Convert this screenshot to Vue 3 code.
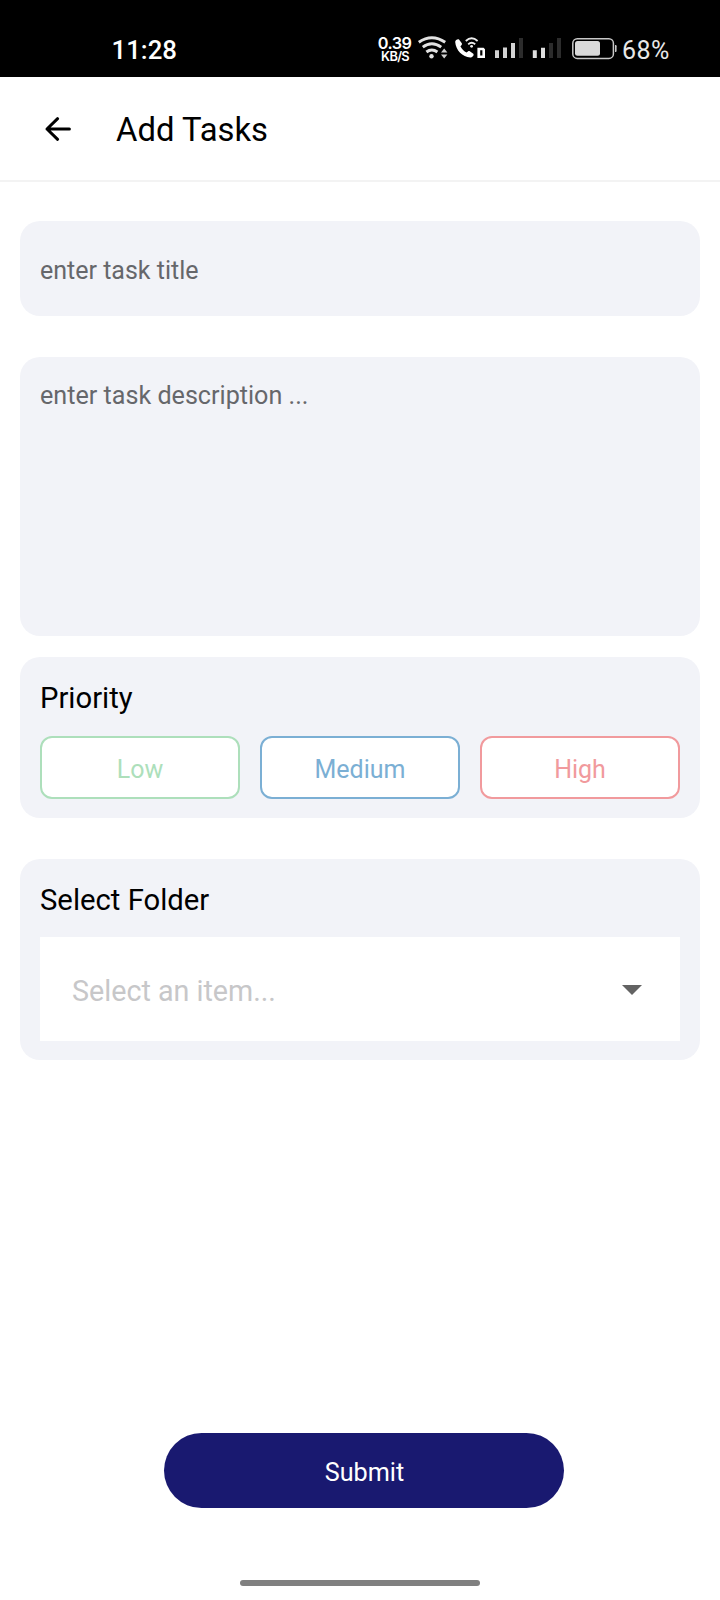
<script setup>
import { ref } from 'vue'

const title = ref('')
const description = ref('')
const priorities = [
  { label: 'Low', tone: 'low' },
  { label: 'Medium', tone: 'medium' },
  { label: 'High', tone: 'high' },
]
</script>

<template>
  <div class="screen">
    <div class="status">
      <span class="clock">11:28</span>
      <svg class="speed" width="35" height="50" viewBox="377 25 35 50" fill="#fff" text-anchor="middle">
        <text class="rate" x="394.6" y="49.2">0.39</text>
        <text class="unit" x="395" y="61.2">KB/S</text>
      </svg>
      <svg class="wifi" width="36" height="50" viewBox="416 25 36 50" fill="none" stroke="#e2e2e2" stroke-width="2.9">
        <path d="M418.8 42.2Q431.8 33.2 445.2 42.2" />
        <path d="M422.8 47.2Q431.8 40.4 441.2 47.2" />
        <path d="M426.4 52Q431.8 47.8 437.4 52" />
        <circle cx="431.5" cy="56.2" r="2.2" fill="#e2e2e2" stroke="none" />
        <path d="M441 52.6L444.2 48.6L447.4 52.6ZM441 54.6L444.2 58.6L447.4 54.6Z" fill="#d0d0d0" stroke="none" />
      </svg>
      <svg class="call" width="36" height="50" viewBox="452 25 36 50" fill="none">
        <path
          d="M455.2 42C455 40.4 457.6 38.8 459 39.5L461.8 43.2C462.3 44.2 461.7 45 460.4 46.2C461.8 49 464 51.2 466.6 52.6C467.8 51.3 468.8 50.7 469.8 51.2L473.3 53.8C474.5 55.4 472 57.6 470.3 57.6C462.5 57 455.8 50.2 455.2 42Z"
          fill="#fff"
        />
        <path d="M465.8 41Q471.6 35.6 477.6 41M468.2 44.3Q471.6 41.2 475.2 44.3" stroke="#eee" stroke-width="1.8" />
        <circle cx="471.6" cy="46.3" r="1.4" fill="#eee" />
        <path d="M477.4 47.7H483.6L485 49.2V58H477.4ZM480.2 50.2V55.6H482.4V50.2Z" fill="#fff" fill-rule="evenodd" />
      </svg>
      <svg class="signal" width="30" height="50" viewBox="494 25 30 50">
        <path d="M495 50.3h4V58h-4zM503 47.5h4V58h-4zM511 43h4v15h-4z" fill="#d2d2d2" />
        <path d="M519 38h4v20h-4z" fill="#2c2c2c" />
      </svg>
      <svg class="signal" width="30" height="50" viewBox="532 25 30 50">
        <path d="M532.8 50.3h4V58h-4zM541 47.7h4V58h-4z" fill="#dedede" />
        <path d="M549 43h4v15h-4zM557 38h4v20h-4z" fill="#2c2c2c" />
      </svg>
      <svg class="battery" width="48" height="50" viewBox="570 25 48 50">
        <rect x="572.8" y="38.8" width="40.6" height="19.6" rx="4.5" fill="none" stroke="#c8c8c8" stroke-width="1.5" />
        <rect x="575" y="41" width="25" height="14.8" rx="2.5" fill="#dadada" />
        <path d="M615 45h.6q1 0 1 1.2v4.6q0 1.2-1 1.2h-.6z" fill="#c8c8c8" />
      </svg>
      <span class="percent">68%</span>
    </div>

    <header class="header">
      <svg width="28" height="28" viewBox="44 114.5 28 28" fill="none" stroke="#000" stroke-width="3" stroke-linecap="round" stroke-linejoin="round">
        <path d="M57.6 118.2L47 128.5L57.6 138.8M47 128.5H69.4" />
      </svg>
      <h1>Add Tasks</h1>
    </header>

    <main class="form">
      <input v-model="title" class="field title" placeholder="enter task title" />
      <textarea v-model="description" class="field desc" placeholder="enter task description ..."></textarea>

      <section class="card priority">
        <h2>Priority</h2>
        <div class="options">
          <button v-for="p in priorities" :key="p.tone" :class="['option', p.tone]">{{ p.label }}</button>
        </div>
      </section>

      <section class="card folder">
        <h2>Select Folder</h2>
        <div class="select">
          <span>Select an item...</span>
          <svg width="20" height="10" viewBox="0 0 20 10"><path d="M0 0H20L10 10Z" fill="#636363" /></svg>
        </div>
      </section>
    </main>

    <button class="submit">Submit</button>
    <div class="home"></div>
  </div>
</template>

<style>
body {
  margin: 0;
  background: #fff;
}
</style>

<style scoped>
.screen {
  width: 720px;
  height: 1600px;
  box-sizing: border-box;
  display: flex;
  flex-direction: column;
  background: #fff;
  color: #000;
  font-family: Roboto, "Noto Sans", sans-serif;
  overflow: hidden;
}
.screen * {
  box-sizing: border-box;
}
.status {
  height: 76.5px;
  flex: none;
  display: flex;
  align-items: flex-start;
  background: #000;
  color: #fff;
}
.status svg {
  flex: none;
  margin-top: 25px;
}
.clock {
  width: 265.5px;
  margin: 35px 0 0 111.5px;
  font-size: 25.8px;
  font-weight: 500;
  line-height: 30px;
}
.status .speed {
  margin-right: 4px;
}
.rate {
  font: 600 16.3px Inter, sans-serif;
  letter-spacing: -0.5px;
}
.unit {
  font: 600 12.8px Inter, sans-serif;
  letter-spacing: -0.7px;
}
.call {
  margin-right: 6px;
}
.signal {
  margin-right: 8px;
}
.percent {
  margin-top: 35px;
  margin-left: 4px;
  font-size: 25px;
  letter-spacing: 0.4px;
  line-height: 31px;
  color: #e8e8e8;
}
.header {
  height: 105.5px;
  flex: none;
  display: flex;
  align-items: center;
  padding: 1px 0 0 44px;
  border-bottom: 2px solid #f3f3f3;
}
h1 {
  margin: 3px 0 0 44px;
  font-size: 32.8px;
  font-weight: 400;
  line-height: 40px;
}
.form {
  display: flex;
  flex-direction: column;
  padding: 39px 20px 0;
}
.field {
  display: block;
  width: 100%;
  margin: 0;
  border: 0;
  outline: 0;
  border-radius: 20px;
  background: #f2f3f8;
  font-family: inherit;
  font-size: 25.15px;
  line-height: 30px;
  color: #000;
  resize: none;
}
.field::placeholder {
  color: #66676b;
  opacity: 1;
}
.title {
  height: 95px;
  padding: 3px 20px 0;
  font-size: 25px;
}
.desc {
  height: 279px;
  margin-top: 41px;
  padding: 24px 20px;
}
.card {
  padding: 0 20px;
  border-radius: 20px;
  background: #f2f3f8;
}
.priority {
  height: 161px;
  margin-top: 21px;
}
.folder {
  height: 201px;
  margin-top: 41px;
}
h2 {
  margin: 0;
  padding-top: 23px;
  font-size: 29.25px;
  font-weight: 400;
  line-height: 36px;
}
.options {
  display: flex;
  gap: 20px;
  margin-top: 20px;
}
.option {
  flex: 1;
  height: 63px;
  padding: 3px 0 0;
  border: 2px solid currentColor;
  border-radius: 12px;
  background: #fff;
  font-family: inherit;
  font-size: 25px;
}
.low {
  color: #addfbb;
}
.medium {
  color: #7bafd4;
}
.high {
  color: #f19a9d;
}
.select {
  height: 104px;
  margin-top: 19px;
  padding: 1px 38px 0 32px;
  display: flex;
  align-items: center;
  justify-content: space-between;
  background: #fff;
  color: #c7c7c9;
  font-size: 28.7px;
}
.select span {
  padding-top: 3px;
}
.submit {
  width: 400px;
  height: 75px;
  flex: none;
  margin: auto 0 72px 164px;
  padding: 3px 0 0 1px;
  border: 0;
  border-radius: 38px;
  background: #191970;
  color: #fff;
  font-family: inherit;
  font-size: 25.2px;
}
.home {
  width: 240px;
  height: 6px;
  flex: none;
  margin: 0 auto 14px;
  border-radius: 3px;
  background: #808080;
}
</style>
